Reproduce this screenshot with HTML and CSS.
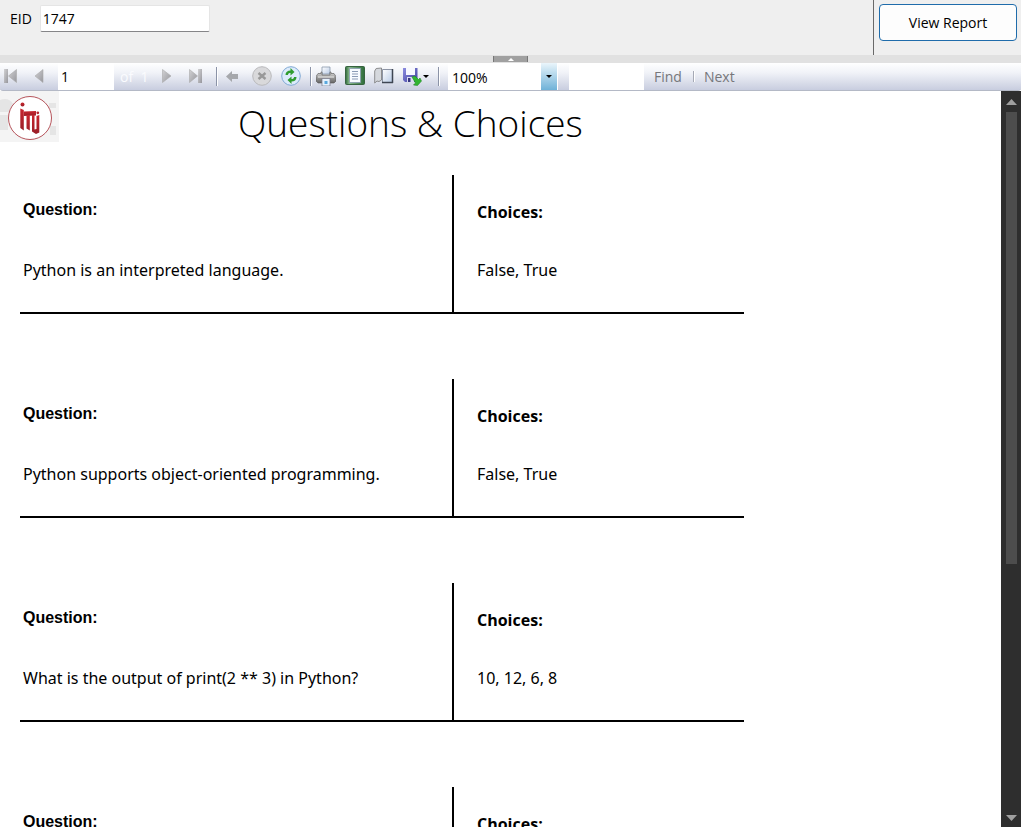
FILE: index.html
```
<!DOCTYPE html>
<html lang="en">
<head>
<meta charset="utf-8">
<title>Questions &amp; Choices</title>
<link rel="stylesheet" href="styles.css">
</head>
<body>
<form class="parameters">
  <div class="fields">
    <label for="eid">EID</label>
    <input class="eid" id="eid" type="text" value="1747">
  </div>
  <div class="submit"><button class="view" type="button">View Report</button></div>
</form>
<div class="splitter">
  <button class="collapse" type="button" aria-label="Hide parameters"><svg width="6" height="3" viewBox="0 0 6 3"><path d="M0 3L3 0L6 3Z" fill="#fff"/></svg></button>
</div>
<svg class="defs" width="0" height="0" aria-hidden="true">
  <defs>
    <linearGradient id="grey" x2="1" y2="1"><stop stop-color="#d2d2d4"/><stop offset="1" stop-color="#96969c"/></linearGradient>
    <linearGradient id="metal" x2="0" y2="1"><stop stop-color="#ddd"/><stop offset=".5" stop-color="#999"/><stop offset="1" stop-color="#666"/></linearGradient>
    <linearGradient id="paper" x2="1" y2="1"><stop stop-color="#fff"/><stop offset="1" stop-color="#b9cbe6"/></linearGradient>
    <linearGradient id="green" x2="1" y2="0"><stop stop-color="#2c6738"/><stop offset=".2" stop-color="#8aba8d"/><stop offset="1" stop-color="#2d6c3a"/></linearGradient>
    <linearGradient id="violet" x2="1" y2="1"><stop stop-color="#8d8de0"/><stop offset="1" stop-color="#41419e"/></linearGradient>
    <linearGradient id="red" x2="0" y2="1"><stop stop-color="#c9252e"/><stop offset="1" stop-color="#9a1f28"/></linearGradient>
  </defs>
</svg>
<div class="toolbar" role="toolbar" aria-label="Report">
  <div class="group">
    <button class="tool" type="button" aria-label="First page"><svg width="20" height="20"><path d="M4 3h4v14H4z" fill="url(#grey)"/><path d="M16.500 3.500v13L8.500 10z" fill="url(#grey)" stroke="#aaa" stroke-width=".6"/></svg></button>
    <button class="tool" type="button" aria-label="Previous page"><svg width="20" height="20"><path d="M14 3.500v13L6 10z" fill="url(#grey)" stroke="#aaa" stroke-width=".6"/></svg></button>
    <input class="page" type="text" value="1" aria-label="Current page">
  </div>
  <span class="total">of&nbsp; 1</span>
  <div class="group">
    <button class="tool" type="button" aria-label="Next page"><svg width="20" height="20"><path d="M5.500 3.500v13l8.500-6.500z" fill="url(#grey)" stroke="#aaa" stroke-width=".6"/></svg></button>
    <button class="tool" type="button" aria-label="Last page"><svg width="20" height="20"><path d="M3.500 3.500v13l8-6.500z" fill="url(#grey)" stroke="#aaa" stroke-width=".6"/><path d="M12 3h4v14h-4z" fill="url(#grey)"/></svg></button>
  </div>
  <span class="divider"></span>
  <div class="group">
    <button class="tool" type="button" aria-label="Back"><svg width="20" height="20"><path d="M3 10.500L9 5v3h6v5H9v3z" fill="#a6a8ac"/></svg></button>
    <button class="tool" type="button" aria-label="Stop"><svg width="20" height="20"><circle cx="10" cy="10" r="9.300" fill="#d9d9db" stroke="#b9b9bb"/><path d="M6.500 7l7 6M13.500 7l-7 6" stroke="#999" stroke-width="2.400"/></svg></button>
    <button class="tool" type="button" aria-label="Refresh"><svg width="20" height="20"><circle cx="10" cy="10" r="9.300" fill="#dcebfb" stroke="#7fa8d3"/><path d="M4.500 9c0-3 2-4.500 5-4.500V2l4 4-4 3.500V7c-1.500 0-2.500.5-2.500 2z" fill="#2f9c2f"/><path d="M15.500 11c0 3-2 4.500-5 4.500V18l-4-4 4-3.500V13c1.500 0 2.500-.5 2.500-2z" fill="#2f9c2f"/></svg></button>
  </div>
  <span class="divider narrow"></span>
  <div class="group">
    <button class="tool" type="button" aria-label="Print"><svg width="20" height="20"><path d="M6 1h8v7H6z" fill="url(#paper)" stroke="#7c8ca2" stroke-width=".7"/><path d="M2 7.500h3V6h1v3h8V6h1v1.500h3l2 3V15l-2 2H2l-2-2v-4.500z" fill="url(#metal)" stroke="#555" stroke-width=".6"/><path d="M2 11h16" stroke="#eee"/><path d="M6 12.500h8V20H6z" fill="#e5f1fc" stroke="#778" stroke-width=".7"/><path d="M8.500 15h3v3h-3z" fill="#59a8de"/></svg></button>
    <button class="tool" type="button" aria-label="Print layout"><svg width="20" height="20"><rect x=".5" y=".5" width="19" height="18" rx="1" fill="url(#green)" stroke="#376340"/><path d="M4.500 2.500h11v14h-11z" fill="#f8fbff" stroke="#889bb0" stroke-width=".8"/><path d="M7 5.500h6M7 8h6M7 10.500h6M7 13h6" stroke="#8b9bb5"/></svg></button>
    <button class="tool" type="button" aria-label="Page setup"><svg width="20" height="20"><path d="M.7 17V5l1.500-2.500 5.300-.5v12L5 15.500 3 15z" fill="#d5d8dd" stroke="#777" stroke-width=".8"/><path d="M8.500 3.500h10v13h-10z" fill="url(#paper)"/><path d="M8.500 3.500h10M8.500 3.500v13" stroke="#8d95a5"/><path d="M18.500 3v14M8 16.500h11" stroke="#3f4653" stroke-width="1.500"/></svg></button>
    <button class="tool export" type="button" aria-label="Export"><svg width="28" height="20"><path d="M0 2h14.500v14H2l-2-2z" fill="url(#violet)"/><path d="M3 2h9v7H3z" fill="#f7f8ff"/><path d="M4 11h7v5H4z" fill="#dadcf2"/><path d="M5 12h2.500v4H5z" fill="#373780"/><path d="M9 11l3-1 3.500 3.500 1.500-1.500 1.500 3-4 4.500-4-.5 2-2z" fill="#31b531" stroke="#23862a" stroke-width=".6"/><path d="M20 9h6l-3 3z" fill="#000"/></svg></button>
  </div>
  <span class="divider last"></span>
  <span class="zoom">
    <select aria-label="Zoom"><option>100%</option><option>150%</option></select>
    <svg class="arrow" width="16" height="26" aria-hidden="true"><path d="M5 12h6l-3 3z" fill="#000"/></svg>
  </span>
  <input class="search" type="text" aria-label="Find text">
  <a class="link" href="#find">Find</a>
  <span class="pipe"></span>
  <a class="link" href="#next">Next</a>
</div>
<div class="viewer">
  <main class="report">
    <header class="heading">
      <svg class="logo" width="59" height="51" viewBox="0 0 59 51" role="img" aria-label="ITI logo">
        <path d="M0 0h59v51H0z" fill="#f4f4f4"/>
        <path d="M0 9Q9 6 13 13L9 21H0zM0 24h8v15H0zM49 12h7v5h-7zM50 35h6v9h-6z" fill="#e5e5e5"/>
        <circle cx="30" cy="27" r="21.500" fill="#fff" stroke="#b6545b"/>
        <circle cx="22.500" cy="13.500" r="2" fill="url(#red)"/>
        <path d="M20.300 17.500l3.500 1.500v20.500l-3.500-2.500z" fill="url(#red)"/>
        <path d="M23.800 20.500L36 20v4.500l-12.200.5z" fill="url(#red)"/>
        <path d="M26.500 24h3.300v15.500l-3.300-2zM32 24h2.500v14.500l2-.5V25l2.800-1v17.500L36 43l-4-2.500z" fill="url(#red)"/>
        <circle cx="37.800" cy="21.800" r="1.400" fill="#b32630"/>
      </svg>
      <h1>Questions &amp; Choices</h1>
    </header>
    <section class="item">
      <div class="question"><h2>Question:</h2><p>Python is an interpreted language.</p></div>
      <div class="choices"><h2>Choices:</h2><p>False, True</p></div>
    </section>
    <section class="item">
      <div class="question"><h2>Question:</h2><p>Python supports object-oriented programming.</p></div>
      <div class="choices"><h2>Choices:</h2><p>False, True</p></div>
    </section>
    <section class="item">
      <div class="question"><h2>Question:</h2><p>What is the output of print(2 ** 3) in Python?</p></div>
      <div class="choices"><h2>Choices:</h2><p>10, 12, 6, 8</p></div>
    </section>
    <section class="item">
      <div class="question"><h2>Question:</h2></div>
      <div class="choices"><h2>Choices:</h2></div>
    </section>
  </main>
  <div class="scrollbar" aria-hidden="true">
    <svg width="11" height="6"><path d="M0 6L5.500 0L11 6Z" fill="#9f9f9f"/></svg>
    <div class="track"><div class="thumb"></div></div>
    <svg width="11" height="6"><path d="M0 0L5.500 6L11 0Z" fill="#9f9f9f"/></svg>
  </div>
</div>
</body>
</html>
```
FILE: styles.css
```
* { box-sizing: border-box; }
body {
  margin: 0;
  height: 100vh;
  display: flex;
  flex-direction: column;
  overflow: hidden;
  background: #fff;
  color: #000;
  font: 14px/20px "Segoe UI", "Open Sans", sans-serif;
}
button, input, select { font: inherit; color: inherit; border: 0; padding: 0; margin: 0; border-radius: 0; }
button { background: none; }
svg { display: block; }
.defs { position: absolute; }

.parameters { display: flex; flex: none; justify-content: space-between; height: 55px; background: #efefef; }
.fields { display: flex; align-items: flex-start; gap: 8px; padding: 5px 10px; }
.fields label { line-height: 28px; }
.eid { width: 170px; height: 27px; padding: 0 2px; background: #fff; border: 1px solid #e5e5e5; border-bottom-color: #858588; border-radius: 2px; }
.submit { padding: 4px 4px 0 5px; border-left: 1px solid #696969; }
.view { width: 138px; height: 37px; background: #fdfdfd; border: 1px solid #1f6cab; border-radius: 4px; }

.splitter { display: flex; flex: none; justify-content: center; align-items: flex-end; height: 8px; padding-bottom: 1px; background: #e1e1e1; }
.collapse { display: flex; justify-content: center; align-items: center; width: 35px; height: 6px; background: #a0a0a0; border: solid #777; border-width: 0 1px; }

.toolbar { display: flex; flex: none; align-items: center; height: 28px; background: linear-gradient(#fff, #f1f3f8 35%, #c8cddf); border-bottom: 1px solid #b4b9c6; border-radius: 0 0 3px 3px; }
.group { display: flex; align-items: center; gap: 9px; }
.tool { width: 20px; height: 20px; margin-bottom: 2px; }
.export { width: 28px; }
.page { width: 56px; height: 27px; padding: 0 3px; background: #fff; }
.total { width: 43px; padding-left: 6px; color: #fafbfe; }
.divider { width: 2px; height: 19px; margin: 0 5px 0 10px; background: #fff; border-left: 1px solid #8b93a7; }
.divider.narrow { margin: 0 4px 0 9px; }
.divider.last { margin: 0 8px 0 7px; }
.zoom { display: flex; position: relative; width: 110px; height: 27px; background: #fff; }
.zoom select { appearance: none; flex: 1; padding: 2px 20px 0 4px; background: #fff; }
.arrow { position: absolute; right: 1px; top: 0; height: 27px; background: linear-gradient(#eaf5fb, #6fb2d8); pointer-events: none; }
.search { width: 75px; height: 27px; margin: 0 10px 0 11px; background: #fff; }
.link { color: #76777b; text-decoration: none; }
.pipe { width: 2px; height: 11px; margin: 0 9px 0 11px; background: #fff; border-left: 1px solid #a5a9b5; }

.viewer { display: flex; flex: 1; min-height: 0; }
.report { flex: 1; overflow: hidden; }
.heading { display: flex; height: 84px; }
.logo { flex: none; }
h1 { margin: 8px 0 0 179px; font-size: 37px; line-height: 48px; font-weight: 300; }
.item { display: grid; grid-template-columns: 432px 1fr; width: 724px; height: 139px; margin: 0 0 65px 20px; border-bottom: 2px solid #000; }
h2, p { margin: 0; }
h2 { font-weight: 700; font-size: 16px; line-height: 20px; }
p { font-family: "Segoe UI", "Noto Sans", sans-serif; font-size: 16px; line-height: 22px; }
.question { padding: 25px 0 0 3px; }
.question h2 { margin-bottom: 39px; font-family: Arial, "Liberation Sans", sans-serif; }
.choices { padding: 27px 0 0 23px; border-left: 2px solid #000; }
.choices h2 { margin-bottom: 37px; }
.scrollbar { display: flex; flex: none; flex-direction: column; align-items: center; width: 20px; padding: 8px 0 6px; background: #2e2e2e; }
.track { flex: 1; width: 11px; margin: 7px 0; }
.thumb { height: 65%; background: #4d4d4d; }
```
